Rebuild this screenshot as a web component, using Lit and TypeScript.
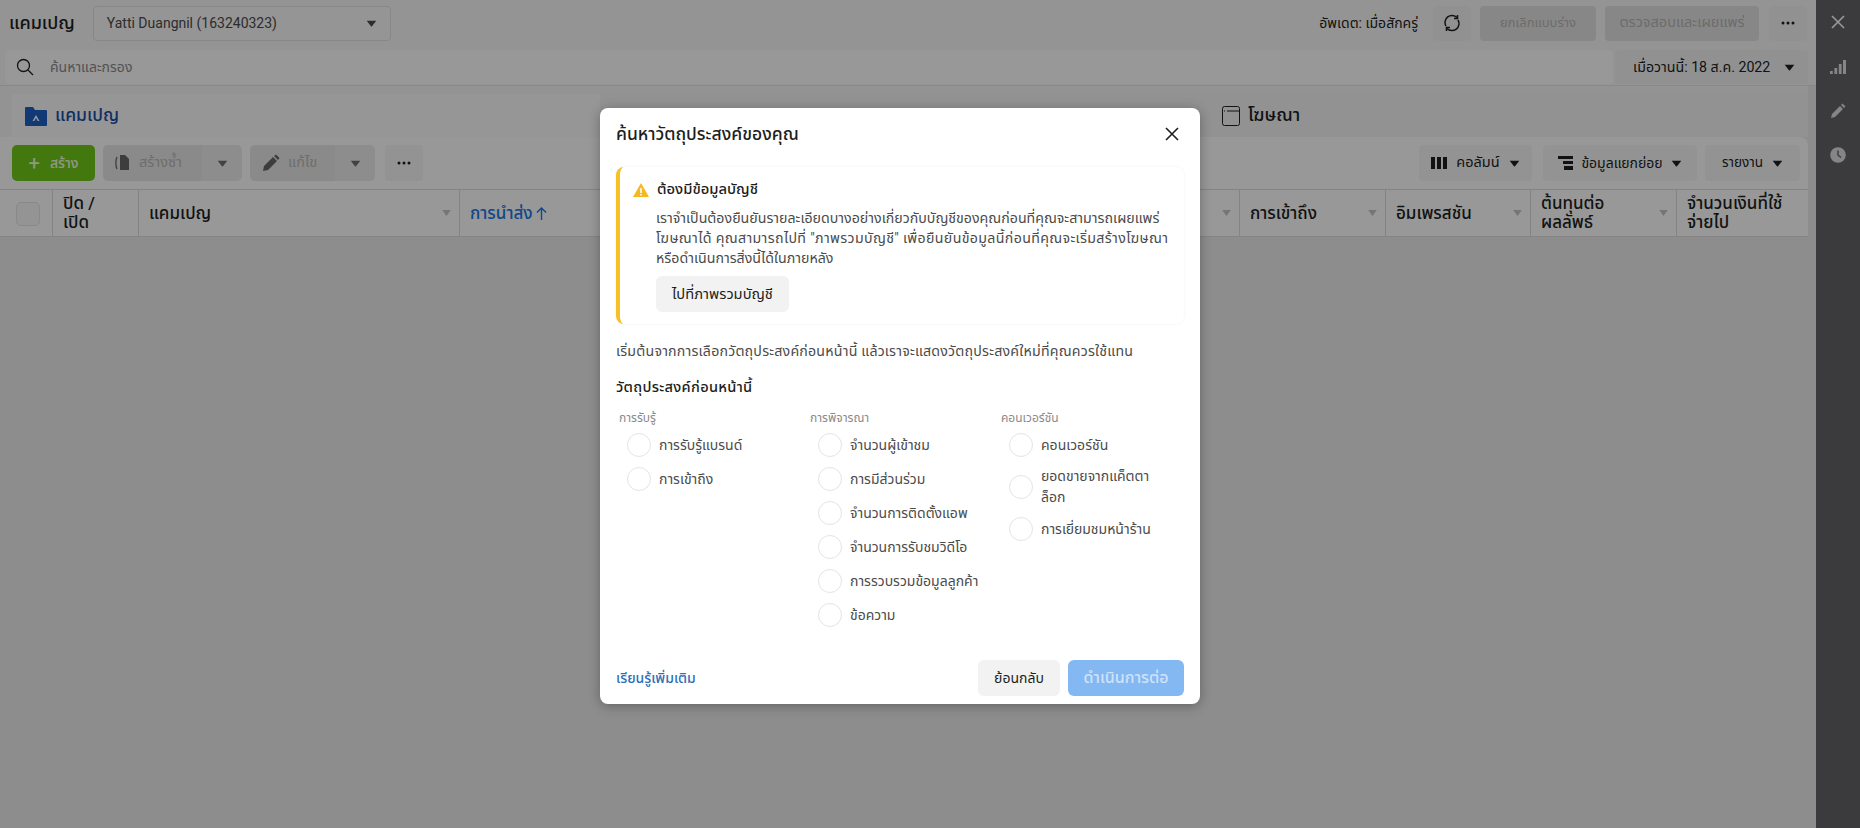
import { LitElement, html, css } from "lit";
import { customElement } from "lit/decorators.js";

const caret = html`<svg class="caret" viewBox="0 0 12 8" width="11" height="7"><path d="M0.5 0.8h11L6.6 7a.8.8 0 0 1-1.2 0z" fill="currentColor"/></svg>`;
const dots = html`<svg viewBox="0 0 14 4" width="14" height="4"><circle cx="2" cy="2" r="1.5" fill="#1c1e21"/><circle cx="7" cy="2" r="1.5" fill="#1c1e21"/><circle cx="12" cy="2" r="1.5" fill="#1c1e21"/></svg>`;
const sortCaret = html`<svg class="sort" viewBox="0 0 10 7" width="9" height="6"><path d="M0 0h10L5 7z" fill="#c4c4c4"/></svg>`;

@customElement("app-root")
export class AppRoot extends LitElement {
  static styles = css`
    :host { display: block; width: 1860px; height: 828px; position: relative; overflow: hidden; font-family: Roboto, "Noto Sans", "Noto Sans Thai", sans-serif; color: #1c1e21; font-size: 14px; }
    * { box-sizing: border-box; }
    .page { display: flex; width: 1860px; height: 828px; background: #ebebeb; }
    .main { width: 1816px; display: flex; flex-direction: column; }
    .side { width: 44px; background: #636366; display: flex; flex-direction: column; align-items: center; padding-top: 14px; gap: 28px; color: #dedede; }
    .side .x { color: #fff; margin-bottom: 1px; }
    .topbar { height: 46px; display: flex; align-items: center; padding: 0 9px 0 9px; background: #f7f7f7; }
    .title { font-size: 18px; font-weight: 500; margin-right: 18px; }
    .select { width: 298px; height: 35px; border: 1px solid #e2e2e2; border-radius: 4px; background: #f9f9f9; display: flex; align-items: center; justify-content: space-between; padding: 0 13px 0 13px; font-size: 14px; color: #4b4b4b; }
    .spacer { flex: 1; }
    .updated { font-size: 14px; margin-right: 15px; }
    .btn { height: 35px; border-radius: 4px; background: #f5f5f5; display: flex; align-items: center; justify-content: center; }
    .refresh { width: 38px; margin-right: 9px; background: #f2f2f2; }
    .dis { background: #e2e2e2; color: #b4b4b4; font-size: 13px; }
    .cancel { width: 116px; margin-right: 9px; }
    .review { width: 154px; margin-right: 10px; font-size: 14.5px; }
    .more { width: 38px; background: #f2f2f2; }
    .searchrow { height: 40px; display: flex; padding: 4px 8px 0 5px; gap: 2px; background: #f7f7f7; border-bottom: 1px solid #e4e4e4; }
    .search { width: 1608px; height: 34px; background: #fdfdfd; border-radius: 4px; display: flex; align-items: center; padding: 0 0 0 11px; gap: 16px; color: #8a8a8a; font-size: 14px; }
    .date { flex: 1; height: 34px; display: flex; align-items: center; justify-content: space-between; padding: 0 13px 0 18px; font-size: 14.2px; background: #f2f2f2; border-radius: 4px; color: #1c1e21; }
    .tabs { height: 51px; width: 1808px; display: flex; padding: 8px 0 0 12px; background: #f5f5f5; }
    .tab { height: 43px; display: flex; align-items: center; gap: 8px; font-weight: 500; }
    .tab.active { width: 588px; padding-left: 13px; font-size: 17.5px; color: #1c4ea3; background: #fbfbfb; }
    .tab.other { flex: 1; padding-left: 622px; font-size: 18px; background: #f3f3f3; color: #1c1e21; }
    .toolbar { height: 52px; width: 1808px; display: flex; align-items: center; padding: 0 8px 0 12px; background: #fdfdfd; border-radius: 0 8px 0 0; }
    .green { width: 83px; height: 36px; background: #70c818; border-radius: 5px; color: #f2ffe0; font-weight: 500; font-size: 14px; display: flex; align-items: center; justify-content: center; gap: 10px; margin-right: 8px; }
    .green b { font-size: 20px; font-weight: 400; }
    .split { display: flex; margin-right: 8px; }
    .split .l { height: 36px; border-radius: 5px 0 0 5px; background: #e6e6e6; color: #b8b8b8; display: flex; align-items: center; gap: 8px; padding-left: 10px; font-size: 14.5px; }
    .split .r { width: 40px; height: 36px; border-radius: 0 5px 5px 0; background: #ececec; display: flex; align-items: center; justify-content: center; color: #6e6e6e; }
    .dup { width: 99px; }
    .split .edit { width: 85px; padding-left: 12px; }
    .t-dots { width: 38px; margin-left: 2px; }
    .tool { height: 36px; border-radius: 4px; display: flex; align-items: center; justify-content: center; gap: 9px; background: #f5f5f5; font-size: 14px; }
    .t-col { width: 113px; font-size: 14.5px; }
    .t-brk { width: 154px; margin-left: 11px; font-size: 14px; gap: 8px; }
    .t-rep { width: 95px; margin-left: 8px; font-size: 13.5px; }
    .table-head { height: 48px; width: 1808px; display: grid; grid-template-columns: 52px 86px 321px 780px 146px 145px 146px 132px; background: #fdfdfd; border-top: 1px solid #dcdcdc; border-bottom: 1px solid #dcdcdc; }
    .c { border-left: 1px solid #dcdcdc; display: flex; align-items: center; justify-content: space-between; padding: 0 8px 0 10px; font-size: 17px; font-weight: 500; line-height: 19px; }
    .c:first-child { border-left: 0; justify-content: center; padding: 2px 0 0 4px; }
    .check { width: 24px; height: 24px; border: 1px solid #e4e4e4; border-radius: 5px; background: #f7f7f7; }
    .blue { color: #1877e8; }
    .sorted { display: flex; align-items: center; gap: 3px; }
    .content { flex: 1; }
    .overlay { position: absolute; inset: 0; background: rgba(0, 0, 0, 0.4); }
    .modal { position: absolute; left: 600px; top: 108px; width: 600px; height: 596px; background: #fff; border-radius: 8px; box-shadow: 0 2px 12px rgba(0,0,0,.3); padding: 0 16px; display: flex; flex-direction: column; }
    .mhead { height: 52px; display: flex; align-items: center; justify-content: space-between; font-size: 17.5px; font-weight: 500; padding-right: 5px; }
    .notice { margin-top: 7px; height: 157px; flex: none; border-left: 4px solid #f6c026; border-radius: 8px; padding: 11px 12px 0 13px; box-shadow: 0 0 3px rgba(0,0,0,.06); }
    .nhead { display: flex; align-items: center; gap: 8px; font-size: 14.8px; font-weight: 500; }
    .ntext { margin: 7px 0 0 23px; width: 520px; font-size: 14.2px; line-height: 20px; color: #4b4b4b; white-space: nowrap; }
    .wide { letter-spacing: 0.35px; }
    .gbtn { display: inline-flex; align-items: center; justify-content: center; background: #f2f2f2; border-radius: 6px; height: 36px; font-size: 14px; color: #1c1e21; }
    .goto { margin: 8px 0 0 23px; width: 133px; font-size: 14.7px; }
    .intro { margin-top: 18px; font-size: 14.2px; letter-spacing: 0.2px; color: #4b4b4b; line-height: 18px; }
    .sub { margin-top: 18px; font-size: 14.6px; letter-spacing: 0.3px; font-weight: 500; line-height: 18px; }
    .cols { display: grid; grid-template-columns: 191px 191px 180px; margin-top: 14px; padding-left: 3px; flex: none; }
    .cat { font-size: 12px; color: #8a8a8a; line-height: 16px; margin-bottom: 2px; }
    .opt { display: flex; align-items: center; gap: 8px; min-height: 34px; padding-left: 8px; font-size: 14px; color: #4b4b4b; line-height: 21px; }
    .opt .r { width: 24px; height: 24px; border-radius: 50%; border: 1px solid #e4e4e4; background: #fff; flex: none; }
    .opt.tall { min-height: 50px; }
    .foot { margin-top: auto; height: 44px; flex: none; display: flex; align-items: flex-start; justify-content: space-between; }
    .link { color: #2d6fb8; font-size: 14px; font-weight: 500; line-height: 36px; }
    .acts { display: flex; gap: 8px; }
    .back { width: 82px; }
    .go { width: 116px; background: #84b8f3; color: #cfe2f8; font-size: 16px; font-weight: 500; }
  `;

  render() {
    return html`
      <div class="page">
        <div class="main">
          <div class="topbar">
            <div class="title">แคมเปญ</div>
            <div class="select"><span>Yatti Duangnil (163240323)</span>${caret}</div>
            <div class="spacer"></div>
            <div class="updated">อัพเดต: เมื่อสักครู่</div>
            <div class="btn refresh">
              <svg viewBox="0 0 18 18" width="18" height="18" fill="none" stroke="#1c1e21" stroke-width="1.5"><path d="M3 12A7 7 0 0 1 14 3.5"/><path d="M15 6A7 7 0 0 1 4 14.5"/><path d="M14.5 1v3.5H11"/><path d="M3.5 17v-3.5H7"/></svg>
            </div>
            <div class="btn dis cancel">ยกเลิกแบบร่าง</div>
            <div class="btn dis review">ตรวจสอบและเผยแพร่</div>
            <div class="btn more">${dots}</div>
          </div>
          <div class="searchrow">
            <div class="search">
              <svg viewBox="0 0 18 18" width="18" height="18" fill="none" stroke="#1c1e21" stroke-width="1.3"><circle cx="7.5" cy="7.5" r="6"/><path d="M12 12l5 5"/></svg>
              <span>ค้นหาและกรอง</span>
            </div>
            <div class="date"><span>เมื่อวานนี้: 18 ส.ค. 2022</span>${caret}</div>
          </div>
          <div class="tabs">
            <div class="tab active">
              <svg viewBox="0 0 22 22" width="22" height="22"><path d="M0 3a1 1 0 0 1 1-1h7l2 3h11a1 1 0 0 1 1 1v14a1 1 0 0 1-1 1H1a1 1 0 0 1-1-1z" fill="#1c5fc4"/><path d="M11 10l3.5 6h-1.8L11 13l-1.7 3H7.5z" fill="#fff"/></svg>
              <span>แคมเปญ</span>
            </div>
            <div class="tab other">
              <svg viewBox="0 0 18 20" width="18" height="20" fill="none" stroke="#1c1e21" stroke-width="1"><rect x=".5" y=".5" width="17" height="19" rx="2"/><path d="M5 5h12M2 5h1"/></svg>
              <span>โฆษณา</span>
            </div>
          </div>
          <div class="toolbar">
            <div class="green"><b>+</b><span>สร้าง</span></div>
            <div class="split"><div class="l dup">
              <svg viewBox="0 0 18 18" width="18" height="18"><path d="M7 1h5l4 4v11H7z" fill="#666"/><path d="M4 3C2.5 6 2.5 12 4 15" fill="none" stroke="#666" stroke-width="1.3"/></svg>
              สร้างซ้ำ</div><div class="r">${caret}</div></div>
            <div class="split"><div class="l edit">
              <svg viewBox="0 0 18 18" width="18" height="18"><path d="M1 17l1-5L11 3l4 4-9 9zM12 2l2-1.5 3.5 3.5L16 6z" fill="#666"/></svg>
              แก้ไข</div><div class="r">${caret}</div></div>
            <div class="tool t-dots">${dots}</div>
            <div class="spacer"></div>
            <div class="tool t-col">
              <svg viewBox="0 0 16 12" width="16" height="12"><path d="M0 0h4v12H0zM6 0h4v12H6zM12 0h4v12h-4z" fill="#1c1e21"/></svg>
              คอลัมน์ ${caret}</div>
            <div class="tool t-brk">
              <svg viewBox="0 0 15 14" width="15" height="14"><path d="M0 0h15v3H0zM5 5h10v3H5zM6 10h9v4H6z" fill="#1c1e21"/></svg>
              ข้อมูลแยกย่อย ${caret}</div>
            <div class="tool t-rep">รายงาน ${caret}</div>
          </div>
          <div class="table-head">
            <div class="c"><div class="check"></div></div>
            <div class="c">ปิด /<br>เปิด</div>
            <div class="c">แคมเปญ ${sortCaret}</div>
            <div class="c blue"><span class="sorted">การนำส่ง
              <svg viewBox="0 0 12 14" width="11" height="13" fill="none" stroke="currentColor" stroke-width="1.5"><path d="M6 14V1M1 6l5-5 5 5"/></svg></span> ${sortCaret}</div>
            <div class="c">การเข้าถึง ${sortCaret}</div>
            <div class="c">อิมเพรสชัน ${sortCaret}</div>
            <div class="c"><span>ต้นทุนต่อ<br>ผลลัพธ์</span> ${sortCaret}</div>
            <div class="c"><span>จำนวนเงินที่ใช้<br>จ่ายไป</span></div>
          </div>
          <div class="content"></div>
        </div>
        <div class="side">
          <svg class="x" viewBox="0 0 16 16" width="16" height="16" fill="none" stroke="currentColor" stroke-width="1.6"><path d="M2 2l12 12M14 2L2 14"/></svg>
          <svg viewBox="0 0 16 16" width="16" height="16" fill="currentColor"><path d="M0 12h2.8v3H0zM4.4 9h2.8v6H4.4zM8.8 5h2.8v10H8.8zM13 1h3v14h-3z"/></svg>
          <svg viewBox="0 0 16 16" width="16" height="16" fill="currentColor"><path d="M1 15l1-4L10 3l3 3-8 8zM11 2l1.5-1.5 3 3L14 5z"/></svg>
          <svg viewBox="0 0 16 16" width="16" height="16"><circle cx="8" cy="8" r="7.8" fill="currentColor"/><path d="M8 3.5V8l3 2.5" fill="none" stroke="#636366" stroke-width="1.4"/></svg>
        </div>
      </div>
      <div class="overlay"></div>
      <div class="modal">
        <div class="mhead"><span>ค้นหาวัตถุประสงค์ของคุณ</span>
          <svg viewBox="0 0 14 14" width="14" height="14" fill="none" stroke="#1c1e21" stroke-width="1.6"><path d="M1 1l12 12M13 1L1 13"/></svg>
        </div>
        <div class="notice">
          <div class="nhead">
            <svg viewBox="0 0 16 14" width="16" height="14"><path d="M8 0l8 14H0z" fill="#f5b91f"/><path d="M7.2 5h1.6v5H7.2zM7.2 11h1.6v1.5H7.2z" fill="#fff"/></svg>
            ต้องมีข้อมูลบัญชี
          </div>
          <div class="ntext">เราจำเป็นต้องยืนยันรายละเอียดบางอย่างเกี่ยวกับบัญชีของคุณก่อนที่คุณจะสามารถเผยแพร่<br><span class="wide">โฆษณาได้ คุณสามารถไปที่ "ภาพรวมบัญชี" เพื่อยืนยันข้อมูลนี้ก่อนที่คุณจะเริ่มสร้างโฆษณา</span><br>หรือดำเนินการสิ่งนี้ได้ในภายหลัง</div>
          <div class="gbtn goto">ไปที่ภาพรวมบัญชี</div>
        </div>
        <div class="intro">เริ่มต้นจากการเลือกวัตถุประสงค์ก่อนหน้านี้ แล้วเราจะแสดงวัตถุประสงค์ใหม่ที่คุณควรใช้แทน</div>
        <div class="sub">วัตถุประสงค์ก่อนหน้านี้</div>
        <div class="cols">
          <div>
            <div class="cat">การรับรู้</div>
            ${["การรับรู้แบรนด์", "การเข้าถึง"].map((t) => html`<div class="opt"><div class="r"></div><span>${t}</span></div>`)}
          </div>
          <div>
            <div class="cat">การพิจารณา</div>
            ${["จำนวนผู้เข้าชม", "การมีส่วนร่วม", "จำนวนการติดตั้งแอพ", "จำนวนการรับชมวิดีโอ", "การรวบรวมข้อมูลลูกค้า", "ข้อความ"].map((t) => html`<div class="opt"><div class="r"></div><span>${t}</span></div>`)}
          </div>
          <div>
            <div class="cat">คอนเวอร์ชัน</div>
            <div class="opt"><div class="r"></div><span>คอนเวอร์ชัน</span></div>
            <div class="opt tall"><div class="r"></div><span>ยอดขายจากแค็ตตา<br>ล็อก</span></div>
            <div class="opt"><div class="r"></div><span>การเยี่ยมชมหน้าร้าน</span></div>
          </div>
        </div>
        <div class="foot">
          <span class="link">เรียนรู้เพิ่มเติม</span>
          <div class="acts">
            <div class="gbtn back">ย้อนกลับ</div>
            <div class="gbtn go">ดำเนินการต่อ</div>
          </div>
        </div>
      </div>
    `;
  }
}
